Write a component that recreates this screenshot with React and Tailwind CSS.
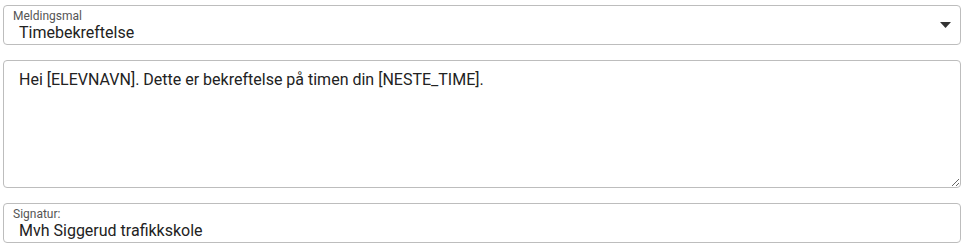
const font = { fontFamily: 'Roboto, "Liberation Sans", sans-serif' }

function FieldBox({ label, value, select }) {
  return (
    <div className="relative h-[40px] rounded-[4px] border border-[#bdbdbd] bg-white pl-[9px] pt-[4px]">
      <div className="text-[12px] leading-[13px] text-[#555555]">{label}</div>
      <div className="pl-[6px] text-[16px] leading-[19px] text-[#222222]">{value}</div>
      {select && (
        <svg className="absolute right-[9px] top-[16px]" width="11" height="6" viewBox="0 0 11 6">
          <path d="M0 0 L11 0 L5.5 6 Z" fill="#333333" />
        </svg>
      )}
    </div>
  )
}

export default function App() {
  return (
    <div className="w-[965px] h-[248px] bg-white pl-[3px] pr-[4px] pt-[5px] flex flex-col gap-[15px]" style={font}>
      <FieldBox label="Meldingsmal" value="Timebekreftelse" select />
      <textarea
        readOnly
        defaultValue="Hei [ELEVNAVN]. Dette er bekreftelse på timen din [NESTE_TIME]."
        className="block h-[128px] w-full resize-y rounded-[4px] border border-[#bdbdbd] bg-white px-[15px] pt-[9px] text-[16px] leading-[19px] text-[#222222] outline-none"
        style={font}
      />
      <FieldBox label="Signatur:" value="Mvh Siggerud trafikkskole" />
    </div>
  )
}
